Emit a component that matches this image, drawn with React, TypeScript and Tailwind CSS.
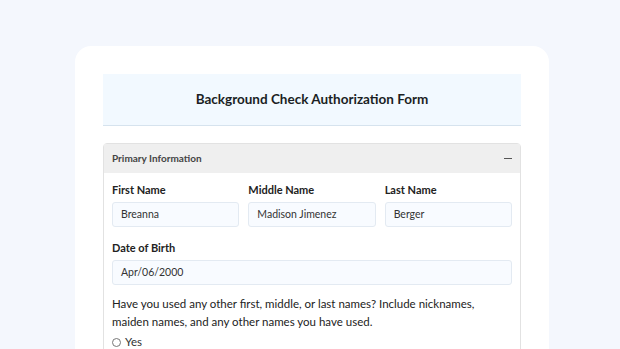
import React from "react";

const Field: React.FC<{ label: string; value: string }> = ({ label, value }) => (
  <div className="flex flex-col">
    <label className="text-[11px] font-bold text-[#222] leading-[14px] mb-[5px]">{label}</label>
    <div className="h-[25px] rounded-[3px] border border-[#e3eaf2] bg-[#f8fbff] px-[8px] flex items-center text-[10.5px] text-[#333]">
      {value}
    </div>
  </div>
);

const App: React.FC = () => {
  return (
    <div
      className="w-[620px] h-[349px] overflow-hidden bg-[#f4f7fd] pt-[46px] pl-[75px]"
      style={{ fontFamily: "Lato, 'Noto Sans', sans-serif" }}
    >
      <div className="w-[474px] bg-white rounded-t-[16px] h-[320px] px-[28px] pt-[28px]">
        {/* Form header */}
        <div className="h-[52px] bg-[#f2f9ff] border-b border-[#d6e3ee] flex items-center justify-center">
          <h1 className="text-[13.5px] font-bold text-[#1b1f24]">
            Background Check Authorization Form
          </h1>
        </div>

        {/* Primary Information section */}
        <div className="mt-[17px] border border-[#e2e2e2] rounded-t-[4px] h-[300px]">
          <div className="h-[29px] bg-[#efefef] flex items-center justify-between pl-[8px] pr-[7px]">
            <span className="text-[10px] font-bold text-[#444]">Primary Information</span>
            <span className="w-[8px] h-[1.5px] bg-[#555] mr-[1px]"></span>
          </div>
          <div className="px-[8px] pt-[10px]">
            <div className="grid grid-cols-3 gap-[9px]">
              <Field label="First Name" value="Breanna" />
              <Field label="Middle Name" value="Madison Jimenez" />
              <Field label="Last Name" value="Berger" />
            </div>
            <div className="mt-[14px]">
              <Field label="Date of Birth" value="Apr/06/2000" />
            </div>
            <p className="mt-[10px] text-[11.5px] leading-[18px] text-[#222]">
              Have you used any other first, middle, or last names? Include nicknames,
              <br />
              maiden names, and any other names you have used.
            </p>
            <div className="mt-[2px] flex items-center gap-[4px] text-[11.5px] leading-[18px] text-[#333]">
              <span className="w-[9px] h-[9px] rounded-full border border-[#777] inline-block"></span>
              Yes
            </div>
          </div>
        </div>
      </div>
    </div>
  );
};

export default App;
